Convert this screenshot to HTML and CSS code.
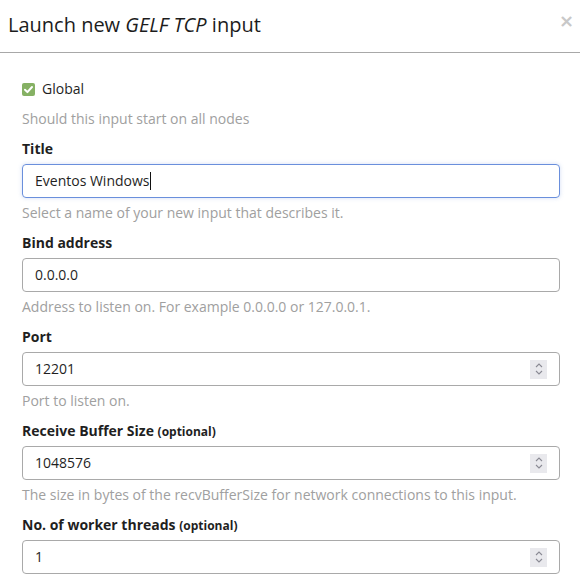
FILE: index.html
```html
<!DOCTYPE html>
<html>
<head>
<meta charset="utf-8">
<link rel="stylesheet" href="styles.css">
</head>
<body>
<div class="modal">
  <div class="modal-header">
    <h2 class="modal-title">Launch new <em>GELF TCP</em> input</h2>
    <span class="close">&times;</span>
  </div>
  <div class="modal-body">
    <div class="check-row">
      <span class="checkbox"><svg width="13" height="13" viewBox="0 0 13 13"><rect width="13" height="13" rx="2" fill="#86b164"/><path d="M3 6.8 L5.4 9.1 L10 4" fill="none" stroke="#fff" stroke-width="2" stroke-linecap="round" stroke-linejoin="round"/></svg></span>
      <span>Global</span>
    </div>
    <p class="help first">Should this input start on all nodes</p>

    <div class="group">
      <label class="label">Title</label>
      <div class="field focus"><span class="value">Eventos Windows</span><span class="caret"></span></div>
      <p class="help">Select a name of your new input that describes it.</p>
    </div>

    <div class="group">
      <label class="label">Bind address</label>
      <div class="field"><span class="value">0.0.0.0</span></div>
      <p class="help">Address to listen on. For example 0.0.0.0 or 127.0.0.1.</p>
    </div>

    <div class="group">
      <label class="label">Port</label>
      <div class="field"><span class="value">12201</span><span class="spin"><svg width="10" height="14" viewBox="0 0 10 14"><path d="M2 5 L5 2 L8 5 M2 9 L5 12 L8 9" fill="none" stroke="#8a8a94" stroke-width="1.1"/></svg></span></div>
      <p class="help">Port to listen on.</p>
    </div>

    <div class="group">
      <label class="label">Receive Buffer Size <small>(optional)</small></label>
      <div class="field"><span class="value">1048576</span><span class="spin"><svg width="10" height="14" viewBox="0 0 10 14"><path d="M2 5 L5 2 L8 5 M2 9 L5 12 L8 9" fill="none" stroke="#8a8a94" stroke-width="1.1"/></svg></span></div>
      <p class="help">The size in bytes of the recvBufferSize for network connections to this input.</p>
    </div>

    <div class="group">
      <label class="label">No. of worker threads <small>(optional)</small></label>
      <div class="field"><span class="value">1</span><span class="spin"><svg width="10" height="14" viewBox="0 0 10 14"><path d="M2 5 L5 2 L8 5 M2 9 L5 12 L8 9" fill="none" stroke="#8a8a94" stroke-width="1.1"/></svg></span></div>
    </div>
  </div>
</div>
</body>
</html>
```
FILE: styles.css
```css
html, body {
  margin: 0;
  padding: 0;
  background: #fff;
}
body {
  font-family: "Open Sans", "DejaVu Sans", sans-serif;
  font-size: 14px;
  line-height: 20px;
  color: #1f1f1f;
  overflow: hidden;
}
.modal {
  width: 580px;
}
.modal-header {
  display: flex;
  justify-content: space-between;
  align-items: flex-start;
  height: 52px;
  border-bottom: 1px solid #a8a8a8;
  padding: 0 6px 0 8px;
}
.modal-title {
  margin: 0;
  padding-top: 11px;
  font-size: 20px;
  line-height: 28px;
  font-weight: 400;
  color: #1c1c1c;
}
.modal-title em {
  font-style: italic;
}
.close {
  font-family: "DejaVu Sans", sans-serif;
  font-size: 18px;
  line-height: 20px;
  font-weight: bold;
  color: #c8c8c8;
  padding-top: 11px;
}
.modal-body {
  padding: 26px 20px 0 22px;
}
.check-row {
  display: flex;
  align-items: center;
  gap: 7px;
  height: 20px;
}
.checkbox {
  display: flex;
  width: 13px;
  height: 13px;
}
.help {
  margin: 5px 0 10px;
  color: #a0a0a0;
}
.help.first {
  margin-top: 10px;
}
.group {
  display: flex;
  flex-direction: column;
}
.label {
  font-weight: 700;
  margin-bottom: 5px;
  height: 20px;
}
.label small {
  font-size: 12px;
  line-height: 1;
}
.field {
  display: flex;
  align-items: center;
  height: 32px;
  border: 1px solid #a9a9a9;
  border-radius: 4px;
  padding: 0 12px 0 12px;
}
.field.focus {
  border-color: #6a8fdc;
  box-shadow: 0 0 4px rgba(106, 143, 220, 0.3);
}
.value {
  flex: 0 0 auto;
}
.caret {
  width: 1px;
  height: 18px;
  background: #111;
}
.spin {
  margin-left: auto;
  display: flex;
  align-items: center;
  justify-content: center;
  width: 17px;
  height: 19px;
  background: #e9e9ed;
}
```
